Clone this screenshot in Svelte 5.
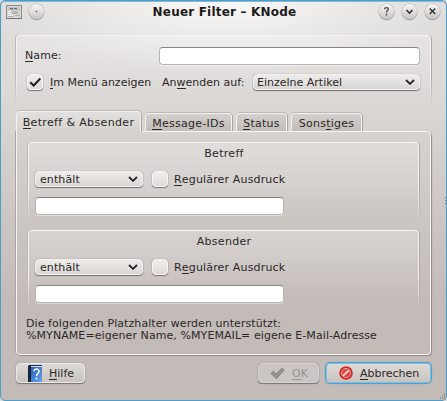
<script>
  let groups = [
    { title: 'Betreff', before: '', key: 'R', after: 'egulärer Ausdruck' },
    { title: 'Absender', before: 'R', key: 'e', after: 'gulärer Ausdruck' }
  ];
</script>

{#snippet chevron()}
  <svg class="chev" width="10" height="7" viewBox="0 0 10 7"><path d="M1.2 2.2 5 6 8.8 2.2" fill="none" stroke="#fff" stroke-opacity=".7" stroke-width="1.8" /><path d="M1 1 5 5 9 1" fill="none" stroke="#2b2827" stroke-width="1.9" /></svg>
{/snippet}

<div class="window">
  <header>
    <svg class="app" width="16" height="15" viewBox="0 0 16 15">
      <rect x=".5" y=".5" width="15" height="13" fill="#d5d5d5" stroke="#8d8d8d" />
      <path d="M0 13.5h16" stroke="#777" />
      <path d="M2 2.5h12" stroke="#bbb" stroke-dasharray="2 1" />
      <path d="M2 4.5h12M2 11.5h5M9 10.5h5" stroke="#b0b0b0" />
      <path d="M4 3.5h8" stroke="#666" stroke-dasharray="3 1" />
      <rect x="6" y="6" width="6" height="3" fill="#b4b4b4" />
      <path d="M2 6.5h3M2 8.5h3M2 10.5h5" stroke="#f3f3f3" />
    </svg>
    <span class="round"><svg width="15" height="15"><circle cx="7.5" cy="7.5" r=".8" fill="#555" /></svg></span>
    <h1>Neuer Filter – KNode</h1>
    <div class="controls">
      <span class="round"><svg width="15" height="15" viewBox="0 0 15 15"><path d="M5.5 5.2C5.7 3.1 9.5 3.2 9.3 5.2 9.2 6.6 7.5 6.6 7.5 8.6M7.5 9.8v1.6" fill="none" stroke="#444" stroke-width="1.3" /></svg></span>
      <span class="round"><svg width="15" height="15" viewBox="0 0 15 15"><path d="M4.5 6 7.5 9 10.5 6" fill="none" stroke="#333" stroke-width="1.6" /></svg></span>
      <span class="round"><svg width="15" height="15" viewBox="0 0 15 15"><path d="M4.7 4.5 10.3 10.1M10.3 4.5 4.7 10.1" fill="none" stroke="#333" stroke-width="1.4" /></svg></span>
    </div>
  </header>

  <section class="general frame">
    <div class="name-row"><label for="name"><u>N</u>ame:</label><input id="name" /></div>
    <div class="apply-row">
      <span class="check"><svg width="16" height="16" viewBox="0 0 16 16"><path d="M3.2 8.3 6.7 11.5 13.3 4.5" fill="none" stroke="#242221" stroke-width="2" /></svg></span>
      <span class="show"><u>I</u>m Menü anzeigen</span>
      <span class="apply">An<u>w</u>enden auf:</span>
      <div class="combo wide"><span>Einzelne Artikel</span>{@render chevron()}</div>
    </div>
  </section>

  <nav>
    <div class="tab active"><span><u>B</u>etreff &amp; Absender</span></div>
    <div class="tab t2"><span><u>M</u>essage-IDs</span></div>
    <div class="tab t3"><span><u>S</u>tatus</span></div>
    <div class="tab t4"><span>Sons<u>t</u>iges</span></div>
  </nav>

  <main>
    {#each groups as g}
      <section class="frame rule">
        <h2>{g.title}</h2>
        <div class="rule-row">
          <div class="combo small"><span>enthält</span>{@render chevron()}</div>
          <span class="check"></span>
          <span class="regex">{g.before}<u>{g.key}</u>{g.after}</span>
        </div>
        <input aria-label={g.title} />
      </section>
    {/each}
    <p>Die folgenden Platzhalter werden unterstützt:<br />%MYNAME=eigener Name, %MYEMAIL= eigene E-Mail-Adresse</p>
  </main>

  <footer>
    <div class="button help">
      <svg width="15" height="17" viewBox="0 0 15 17">
        <defs><linearGradient id="book" x2="1" y2="1"><stop stop-color="#2460b4" /><stop offset="1" stop-color="#67a5ef" /></linearGradient></defs>
        <path d="M1 0h13v2H4v15H0V1z" fill="#17263d" /><path d="M3 1.5h11" stroke="#d8e1ec" />
        <rect x="3" y="2" width="11" height="15" fill="url(#book)" />
        <path d="M5.8 6.3C5.8 3.3 11.1 3.4 11 6.5 10.9 8.6 8.5 8.6 8.5 11.1M8.5 12.5v2" fill="none" stroke="#fff" stroke-width="1.5" />
      </svg>
      <span><u>H</u>ilfe</span>
    </div>
    <div class="button ok">
      <svg width="15" height="13" viewBox="0 0 15 13"><path d="M1 6.5 3.5 4.3 6 7 12 1.2 14.2 3 6.3 11.8z" fill="#969390" stroke="#7c7976" stroke-width=".8" /></svg>
      <span><u>O</u>K</span>
    </div>
    <div class="button cancel">
      <svg width="14" height="14" viewBox="0 0 14 14"><circle cx="7" cy="7" r="6.8" fill="#cf2a27" /><circle cx="7" cy="7" r="4.5" fill="#e0443e" stroke="#eaa9a4" stroke-width=".9" /><path d="M4.1 9.9 9.9 4.1" stroke="#f2dddb" stroke-width="1.7" /></svg>
      <span><u>A</u>bbrechen</span>
    </div>
  </footer>
  <span class="grip"></span>
  <svg class="corner" width="7" height="7"><path d="M5 1h1M3 3h1M5 3h1M1 5h1M3 5h1M5 5h1" stroke="#77716f" /></svg>
</div>

<style>
  :global(body) { margin: 0; background: #dcdcdc; overflow: hidden; }
  * { box-sizing: border-box; }
  .window {
    position: relative; width: 447px; height: 401px; border: 1px solid #4d9dcb; border-radius: 5px;
    box-shadow: inset 0 1px #83b9d8;
    background: radial-gradient(ellipse 230px 75px at 50% 0, rgba(255,255,255,.8), rgba(255,255,255,0)), linear-gradient(#e0dedc 0, #dcd9d7 90px, #d4d0cd 150px, #c3bbb8 300px);
    font: 11px/13px "DejaVu Sans", sans-serif; letter-spacing: 0; color: #2b2827; padding: 0 15px; white-space: nowrap;
  }
  u { text-decoration: none; border-bottom: 1px solid currentColor; display: inline-block; line-height: 11px; }
  header { display: flex; height: 34px; margin: 0 -10px; padding: 3px 1px 0 0; align-items: flex-start; }
  .app { margin: 1px 7px 0 0; }
  .round { display: block; width: 15px; height: 15px; border-radius: 50%; background: linear-gradient(#f7f7f6, #c8c5c3); box-shadow: 0 0 0 .5px #aaa6a4, 0 1px 1px #888; }
  .round svg { display: block; }
  h1 { font: bold 12px/16px "DejaVu Sans", sans-serif; margin: 0; flex: 1; text-align: center; letter-spacing: .2px; padding-left: 26px; color: #1c1a1a; }
  .controls { display: flex; gap: 8px; }
  .frame { position: relative; }
  .frame::before { content: ""; position: absolute; inset: 0; border: 1px solid #f5f4f3; border-bottom: 0; border-radius: 4px 4px 0 0; box-shadow: 1px 0 0 #aaa6a3, -1px 0 0 #bbb7b5, 0 -1px 0 #c9c6c4; background: linear-gradient(rgba(255,255,255,.25), transparent); mask: linear-gradient(#000 60%, transparent); mask-clip: no-clip; pointer-events: none; }
  .frame > :global(*) { position: relative; }
  .general { height: 69px; width: 415px; padding: 12px 11px 0 9px; }
  input { display: block; height: 18px; padding: 0; border: 1px solid #b7b4b2; border-top-color: #898583; border-radius: 4px; background: #fff; box-shadow: 0 1px rgba(255,255,255,.45); outline: 0; }
  .name-row { display: flex; align-items: center; justify-content: space-between; }
  .name-row label { padding-bottom: 1px; letter-spacing: .1px; }
  .name-row input { width: 261px; }
  .apply-row { display: flex; align-items: center; height: 16px; margin-top: 9px; padding-left: 2px; }
  .check { display: block; flex: none; width: 16px; height: 16px; border: 1px solid #f8f7f6; border-radius: 4px; background: linear-gradient(#efeeec, #dddad7); box-shadow: 0 1px 1px #777371, 0 0 1px #777371; }
  .check svg { display: block; margin: -1px; }
  .show { width: 112px; margin-left: 7px; flex: none; }
  .apply { width: 91px; flex: none; }
  .combo { display: flex; flex: none; align-items: center; justify-content: space-between; height: 16px; border: 1px solid #f1f0ee; border-radius: 4px; box-shadow: 0 1px 1px #777371, 0 0 1px #777371; background: linear-gradient(#eeecea, #d9d6d3); padding: 0 4px 0 3px; }
  .chev { margin-top: 1px; }
  .wide { width: 167px; }
  .small { width: 108px; padding-left: 4px; letter-spacing: .1px; }
  nav { display: flex; align-items: flex-end; height: 20px; margin-top: 7px; letter-spacing: .25px; }
  .tab { height: 18px; border: 1px solid #f5f3f2; border-bottom: 0; border-radius: 4px 4px 0 0; background: linear-gradient(#d4d0cd, #c3bcb9); box-shadow: 1px 0 0 #aaa5a2, 0 -1px 0 #bcb7b4; text-align: center; padding-top: 3px; margin-left: 4px; }
  .active { width: 125px; height: 21px; background: linear-gradient(#e2e0de, #d5d2cf); margin: 0 0 -1px; z-index: 1; padding-top: 4px; letter-spacing: .36px; }
  .t2 { width: 87px; } .t3 { width: 51px; } .t4 { width: 71px; }
  main { width: 415px; height: 224px; border: 1px solid #f7f5f4; border-radius: 0 4px 4px; box-shadow: 1px 1px 1px #928c89, -1px 0 #aaa5a2; padding: 10px 10px 0 11px; }
  .rule { width: 391px; height: 80px; margin-bottom: 8px; padding: 5px 6px 0 7px; }
  h2 { font: inherit; letter-spacing: .3px; margin: 0; text-align: center; height: 13px; }
  .rule-row { display: flex; align-items: center; height: 18px; margin: 10px 0 9px; }
  .rule-row .check { margin-left: 9px; }
  .regex { margin-left: 6px; letter-spacing: .16px; }
  .rule input { width: 249px; }
  p { margin: 0 0 0 -2px; line-height: 12px; letter-spacing: .075px; }
  footer { display: flex; height: 20px; margin-top: 8px; width: 415px; }
  .button { height: 20px; display: flex; align-items: center; border: 1px solid #ebe8e5; border-radius: 4px; background: linear-gradient(#dedbd7, #c9c4c0); box-shadow: 0 1px 1px #777371, 0 0 1px #777371; }
  .help { width: 69px; padding-left: 11px; gap: 6px; }
  .ok { margin-left: auto; width: 61px; padding-left: 11px; gap: 7px; color: #969290; background: #cbc6c3; border-color: #d6d2cf; }
  .cancel { margin-left: 7px; width: 105px; padding-left: 12px; gap: 7px; border-color: #77bfe4; box-shadow: 0 0 1px 1px #429fd0; }
  .grip { position: absolute; right: 0; top: 196px; width: 1px; height: 8px; background: repeating-linear-gradient(#777 0 1px, transparent 1px 3px); }
  .corner { position: absolute; right: 0; bottom: 0; }
</style>
